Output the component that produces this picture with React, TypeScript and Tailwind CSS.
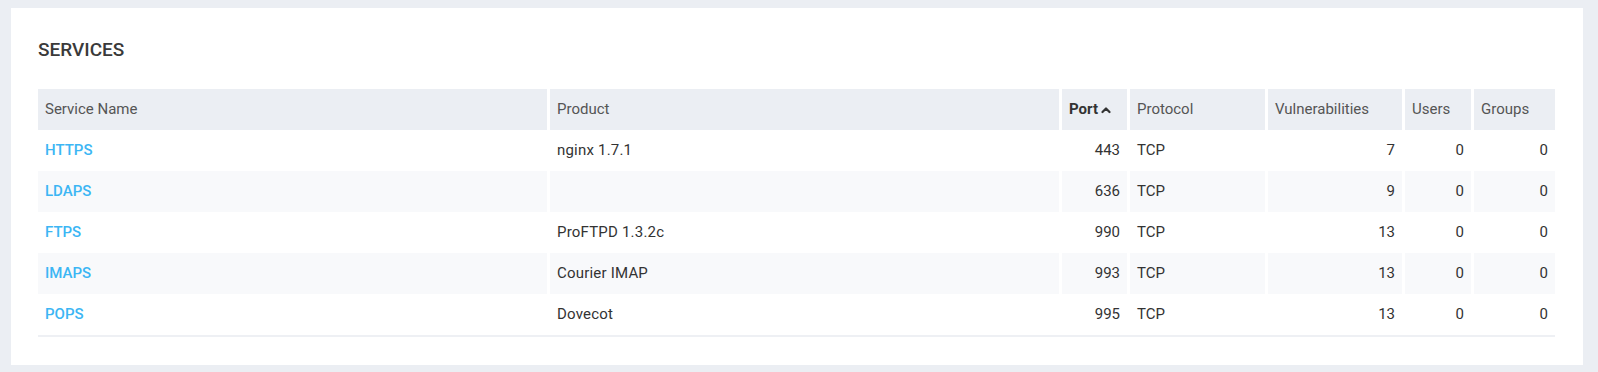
import React from 'react';

type Service = {
  name: string;
  product: string;
  port: number;
  protocol: string;
  vulns: number;
  users: number;
  groups: number;
};

const services: Service[] = [
  { name: 'HTTPS', product: 'nginx 1.7.1', port: 443, protocol: 'TCP', vulns: 7, users: 0, groups: 0 },
  { name: 'LDAPS', product: '', port: 636, protocol: 'TCP', vulns: 9, users: 0, groups: 0 },
  { name: 'FTPS', product: 'ProFTPD 1.3.2c', port: 990, protocol: 'TCP', vulns: 13, users: 0, groups: 0 },
  { name: 'IMAPS', product: 'Courier IMAP', port: 993, protocol: 'TCP', vulns: 13, users: 0, groups: 0 },
  { name: 'POPS', product: 'Dovecot', port: 995, protocol: 'TCP', vulns: 13, users: 0, groups: 0 },
];

const cols = 'grid grid-cols-[509px_509px_65px_135px_134px_66px_81px] gap-x-[3px]';

const Th: React.FC<{ children: React.ReactNode; bold?: boolean }> = ({ children, bold }) => (
  <div className={`h-[41px] flex items-center px-[7px] bg-[#ebeef3] ${bold ? 'font-bold text-[#333]' : 'text-[#555]'}`}>
    {children}
  </div>
);

export default function App() {
  return (
    <div className="min-h-[372px] bg-[#ebeef3] pt-[8px] pl-[11px] pr-[15px] pb-[7px] font-['Roboto','Liberation_Sans',sans-serif]">
      <div className="bg-white h-[357px] pl-[27px] pr-[27px] pt-[30px]">
        <h2 className="text-[19px] leading-[24px] font-medium text-[#3a3a3a]">SERVICES</h2>

        <div className="mt-[27px] text-[15px] text-[#333]">
          {/* header */}
          <div className={cols}>
            <Th>Service Name</Th>
            <Th>Product</Th>
            <Th bold>
              Port
              <svg className="ml-[3px] mt-[1px]" width="10" height="8" viewBox="0 0 10 8" fill="none">
                <polyline points="1.5,6 5,2.5 8.5,6" stroke="#333" strokeWidth="2.2" strokeLinecap="round" strokeLinejoin="round" />
              </svg>
            </Th>
            <Th>Protocol</Th>
            <Th>Vulnerabilities</Th>
            <Th>Users</Th>
            <Th>Groups</Th>
          </div>

          {/* rows */}
          {services.map((s, i) => {
            const bg = i % 2 === 1 ? 'bg-[#f8f9fb]' : 'bg-white';
            const cell = `h-[41px] flex items-center px-[7px] ${bg}`;
            return (
              <div key={s.name} className={cols}>
                <div className={cell}>
                  <a href="#" className="text-[#3cb6f4] font-medium">{s.name}</a>
                </div>
                <div className={`${cell} tracking-[0.2px]`}>{s.product}</div>
                <div className={`${cell} justify-end`}>{s.port}</div>
                <div className={cell}>{s.protocol}</div>
                <div className={`${cell} justify-end`}>{s.vulns}</div>
                <div className={`${cell} justify-end`}>{s.users}</div>
                <div className={`${cell} justify-end`}>{s.groups}</div>
              </div>
            );
          })}
          <div className="h-[2px] w-[1517px] bg-[#eef0f4]" />
        </div>
      </div>
    </div>
  );
}
